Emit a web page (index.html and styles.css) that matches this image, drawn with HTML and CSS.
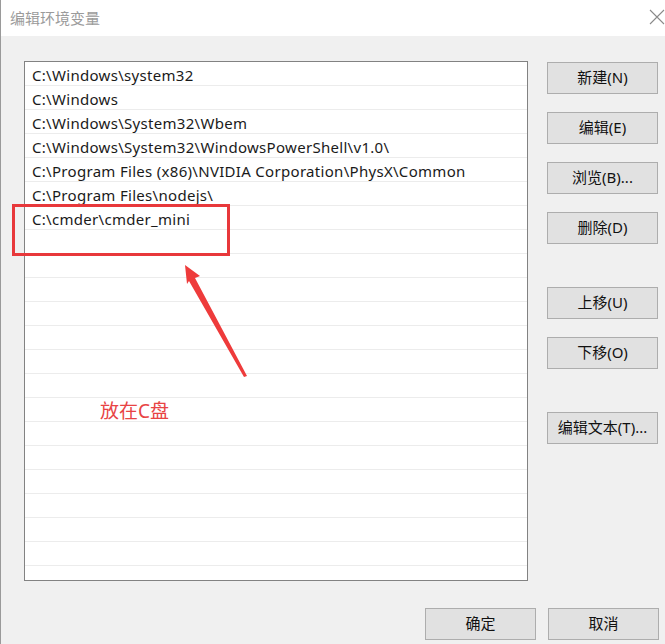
FILE: index.html
```html
<!DOCTYPE html>
<html lang="zh-CN">

<head>
    <meta charset="UTF-8">
    <meta name="viewport" content="width=device-width, initial-scale=1.0">
    <title>编辑环境变量</title>
    <link rel="stylesheet" href="styles.css">
</head>

<body>
    <div class="window">
        <div class="titlebar">
            <span class="title">编辑环境变量</span>
            <span class="close">
                <svg width="16" height="16" viewBox="0 0 16 16">
                    <path d="M1 1 L15 15 M15 1 L1 15" stroke="#8a8a8a" stroke-width="1.1" fill="none"/>
                </svg>
            </span>
        </div>

        <div class="content">
            <div class="path-list">
                <div class="row">C:\Windows\system32</div>
                <div class="row">C:\Windows</div>
                <div class="row">C:\Windows\System32\Wbem</div>
                <div class="row">C:\Windows\System32\WindowsPowerShell\v1.0\</div>
                <div class="row">C:\Program Files (x86)\NVIDIA Corporation\PhysX\Common</div>
                <div class="row">C:\Program Files\nodejs\</div>
                <div class="row">C:\cmder\cmder_mini</div>
                <div class="row"></div>
                <div class="row"></div>
                <div class="row"></div>
                <div class="row"></div>
                <div class="row"></div>
                <div class="row"></div>
                <div class="row"></div>
                <div class="row"></div>
                <div class="row"></div>
                <div class="row"></div>
                <div class="row"></div>
                <div class="row"></div>
                <div class="row"></div>
                <div class="row"></div>
                <div class="row"></div>
            </div>

            <div class="side-buttons">
                <button class="btn">新建(N)</button>
                <button class="btn">编辑(E)</button>
                <button class="btn">浏览(B)...</button>
                <button class="btn">删除(D)</button>
                <button class="btn group">上移(U)</button>
                <button class="btn">下移(O)</button>
                <button class="btn group">编辑文本(T)...</button>
            </div>
        </div>

        <div class="footer">
            <button class="btn">确定</button>
            <button class="btn">取消</button>
        </div>

        <!-- red annotation drawn over the dialog -->
        <svg class="annotation" width="665" height="644" viewBox="0 0 665 644">
            <rect x="13.5" y="205.5" width="215" height="49" fill="none" stroke="#e8383b" stroke-width="3"/>
            <path d="M185 265 L200 276 L195 278 L247 376 L244 377 L189 281 L187 284 Z" fill="#ee3b3b"/>
        </svg>
        <span class="note">放在C盘</span>
    </div>
</body>

</html>
```

FILE: styles.css
```css
body {
    margin: 0;
    font-family: "Noto Sans", "Noto Sans CJK SC", sans-serif;
}

.window {
    position: relative;
    width: 665px;
    height: 644px;
    background-color: #f0f0f0;
    border-left: 1px solid #9a9a9a;
    box-sizing: border-box;
    overflow: hidden;
}

.titlebar {
    height: 36px;
    background-color: #fff;
    display: flex;
    align-items: center;
    justify-content: space-between;
    padding: 0 0 0 9px;
}

.title {
    font-size: 15px;
    color: #9b9b9b;
    margin-top: -2px;
}

.close {
    display: flex;
    margin-top: -2px;
}

.content {
    display: flex;
    padding: 25px 7px 0 23px;
    gap: 19px;
}

.path-list {
    width: 503px;
    height: 518px;
    background-color: #fff;
    border: 1px solid #828282;
    overflow: hidden;
}

.row {
    height: 23px;
    border-bottom: 1px solid #ececec;
    padding-left: 7px;
    font-size: 15px;
    letter-spacing: 0.3px;
    line-height: 26px;
    color: #1a1a1a;
    white-space: nowrap;
}

.side-buttons {
    display: flex;
    flex-direction: column;
    gap: 18px;
    padding-top: 1px;
}

.btn {
    width: 111px;
    height: 32px;
    background-color: #e1e1e1;
    border: 1px solid #adadad;
    font-family: "Noto Sans", "Noto Sans CJK SC", sans-serif;
    font-size: 15px;
    color: #111;
    padding: 0 0 3px;
}

.side-buttons .group {
    margin-top: 25px;
}

.footer {
    display: flex;
    justify-content: flex-end;
    gap: 12px;
    padding: 27px 6px 0 0;
}

.annotation {
    position: absolute;
    left: -1px;
    top: 0;
    pointer-events: none;
}

.note {
    position: absolute;
    left: 99px;
    top: 396px;
    font-size: 19px;
    color: #e84444;
}
```
